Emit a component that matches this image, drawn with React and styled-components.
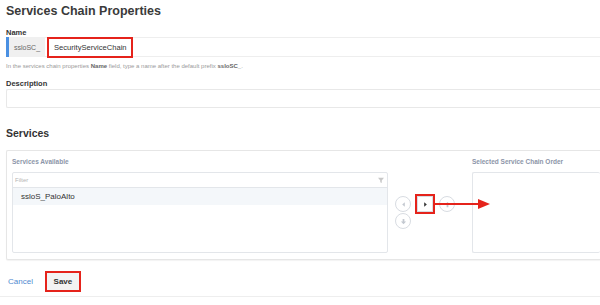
import { createGlobalStyle, styled } from "styled-components";

const GlobalStyle = createGlobalStyle`
  html, body {
    margin: 0;
    padding: 0;
    background: #ffffff;
    overflow: hidden;
  }
  body {
    font-family: "Liberation Sans", Arial, sans-serif;
    color: #333;
  }
`;

const Page = styled.div`
  padding: 3px 0 0 6px;
`;

const Title = styled.h2`
  margin: 0;
  font-size: 12.5px;
  line-height: 16px;
  font-weight: 700;
  color: #3a3a3a;
`;

const Label = styled.div`
  font-size: 7.5px;
  font-weight: 700;
  color: #333;
  line-height: 8px;
  margin-top: ${(p) => p.$mt || 0}px;
`;

/* the form runs on past the right edge, so no right borders */
const NameRow = styled.div`
  display: flex;
  height: 20px;
  border-top: 1px solid #eeeeee;
  border-bottom: 1px solid #eeeeee;
  box-sizing: border-box;
  align-items: stretch;
`;

const Stripe = styled.div`
  width: 3px;
  background: #4a90e2;
  margin: -1px 0;
`;

const Prefix = styled.div`
  width: 36px;
  background: #f0f0f0;
  color: #666;
  font-size: 7px;
  display: flex;
  align-items: center;
  justify-content: center;
  margin: -1px 0;
`;

const RedInput = styled.div`
  margin: -1px 0 -2px 2px;
  width: 86px;
  box-sizing: border-box;
  border: 2px solid #e5231b;
  font-size: 7.6px;
  color: #333;
  display: flex;
  align-items: center;
  padding-left: 5px;
  background: #fff;
  white-space: nowrap;
`;

const Help = styled.div`
  font-size: 6px;
  color: #9a9a9a;
  margin-top: 5px;
  line-height: 8px;

  b {
    color: #666;
  }
`;

const TextBox = styled.div`
  height: 17px;
  margin-top: 1px;
  border: 1px solid #e8e8e8;
  border-right: none;
  border-radius: 2px 0 0 2px;
`;

const Section = styled.h3`
  margin: 18px 0 0;
  font-size: 10.5px;
  line-height: 14px;
  font-weight: 700;
  color: #333;
`;

const Panel = styled.div`
  margin-top: 10px;
  height: 110px;
  box-sizing: border-box;
  border: 1px solid #e6e6e6;
  border-right: none;
  border-radius: 2px 0 0 2px;
  box-shadow: 0 1px 1px rgba(0, 0, 0, 0.05);
  padding: 6px 0 0 5px;
  display: grid;
  grid-template-columns: 376px 84px 1fr;
`;

const Column = styled.div`
  display: flex;
  flex-direction: column;
`;

const ColTitle = styled.div`
  font-size: 6.5px;
  font-weight: 700;
  color: #8c95a8;
  line-height: 9px;
  height: 15px;
`;

const ListBox = styled.div`
  height: 81px;
  box-sizing: border-box;
  border: 1px solid #e3e6ea;
  border-right: ${(p) => (p.$open ? "none" : "1px solid #e3e6ea")};
  border-radius: 2px;
`;

const FilterRow = styled.div`
  height: 14px;
  border-bottom: 1px solid #e3e6ea;
  display: flex;
  align-items: center;
  justify-content: space-between;
  padding: 0 3px 0 2px;
  font-size: 6px;
  color: #b5b5b5;
`;

const Item = styled.div`
  height: 17px;
  background: #f4f7fa;
  display: flex;
  align-items: center;
  padding-left: 8px;
  font-size: 8px;
  color: #333;
`;

const Controls = styled.div`
  display: grid;
  grid-template-columns: repeat(3, 16px);
  grid-auto-rows: 16px;
  column-gap: 6px;
  row-gap: 1px;
  align-content: center;
  padding: 9px 0 0 7px;
  position: relative;
`;

const Circle = styled.div`
  width: 16px;
  height: 16px;
  box-sizing: border-box;
  border: 1px solid #d8dce2;
  display: flex;
  align-items: center;
  justify-content: center;
  background: #fff;
  outline: ${(p) => (p.$marked ? "2px solid #e5231b" : "none")};
  border-radius: ${(p) => (p.$marked ? "0" : "50%")};
`;

const Arrow = styled.svg`
  position: absolute;
  left: 46px;
  top: 41px;
`;

const Footer = styled.div`
  display: flex;
  align-items: center;
  gap: 12px;
  margin-top: 11px;
  padding-left: 2px;
  height: 21px;
`;

const Cancel = styled.span`
  font-size: 8px;
  color: #4f8ad0;
`;

const Save = styled.div`
  width: 36px;
  height: 21px;
  box-sizing: border-box;
  border: 2px solid #e5231b;
  background: #f3f3f3;
  font-size: 8px;
  font-weight: 700;
  color: #333;
  display: flex;
  align-items: center;
  justify-content: center;
`;

const Rule = styled.div`
  margin: 4px 0 0 -6px;
  border-top: 1px solid #eeeeee;
`;

const Glyph = ({ d, color = "#c3c8d0" }) => (
  <svg width="7" height="7" viewBox="0 0 8 8">
    <path d={d} fill={color} />
  </svg>
);

export default function App() {
  return (
    <>
      <GlobalStyle />
      <Page>
        <Title>Services Chain Properties</Title>
        <Label $mt={10}>Name</Label>
        <NameRow>
          <Stripe />
          <Prefix>ssloSC_</Prefix>
          <RedInput>SecurityServiceChain</RedInput>
        </NameRow>
        <Help>
          In the services chain properties <b>Name</b> field, type a name after
          the default prefix <b>ssloSC_</b>.
        </Help>
        <Label $mt={10}>Description</Label>
        <TextBox />
        <Section>Services</Section>
        <Panel>
          <Column>
            <ColTitle>Services Available</ColTitle>
            <ListBox>
              <FilterRow>
                <span>Filter</span>
                <svg width="6" height="6" viewBox="0 0 8 8">
                  <path d="M0 1h8L5 4.5V8L3 7V4.5z" fill="#c8c8c8" />
                </svg>
              </FilterRow>
              <Item>ssloS_PaloAlto</Item>
            </ListBox>
          </Column>
          <Controls>
            <Circle>
              <Glyph d="M5.5 1.5v5L2.5 4z" />
            </Circle>
            <Circle $marked>
              <Glyph d="M2.5 1.5v5L5.5 4z" color="#333" />
            </Circle>
            <Circle>
              <Glyph d="M4 1l3 3H5v3H3V4H1z" />
            </Circle>
            <Circle>
              <Glyph d="M4 7L1 4h2V1h2v3h2z" />
            </Circle>
            <Arrow width="58" height="12" viewBox="0 0 58 12">
              <line x1="0" y1="6" x2="46" y2="6" stroke="#e5231b" strokeWidth="2" />
              <path d="M44 1l12 5-12 5z" fill="#e5231b" />
            </Arrow>
          </Controls>
          <Column>
            <ColTitle>Selected Service Chain Order</ColTitle>
            <ListBox $open />
          </Column>
        </Panel>
        <Footer>
          <Cancel>Cancel</Cancel>
          <Save>Save</Save>
        </Footer>
        <Rule />
      </Page>
    </>
  );
}
